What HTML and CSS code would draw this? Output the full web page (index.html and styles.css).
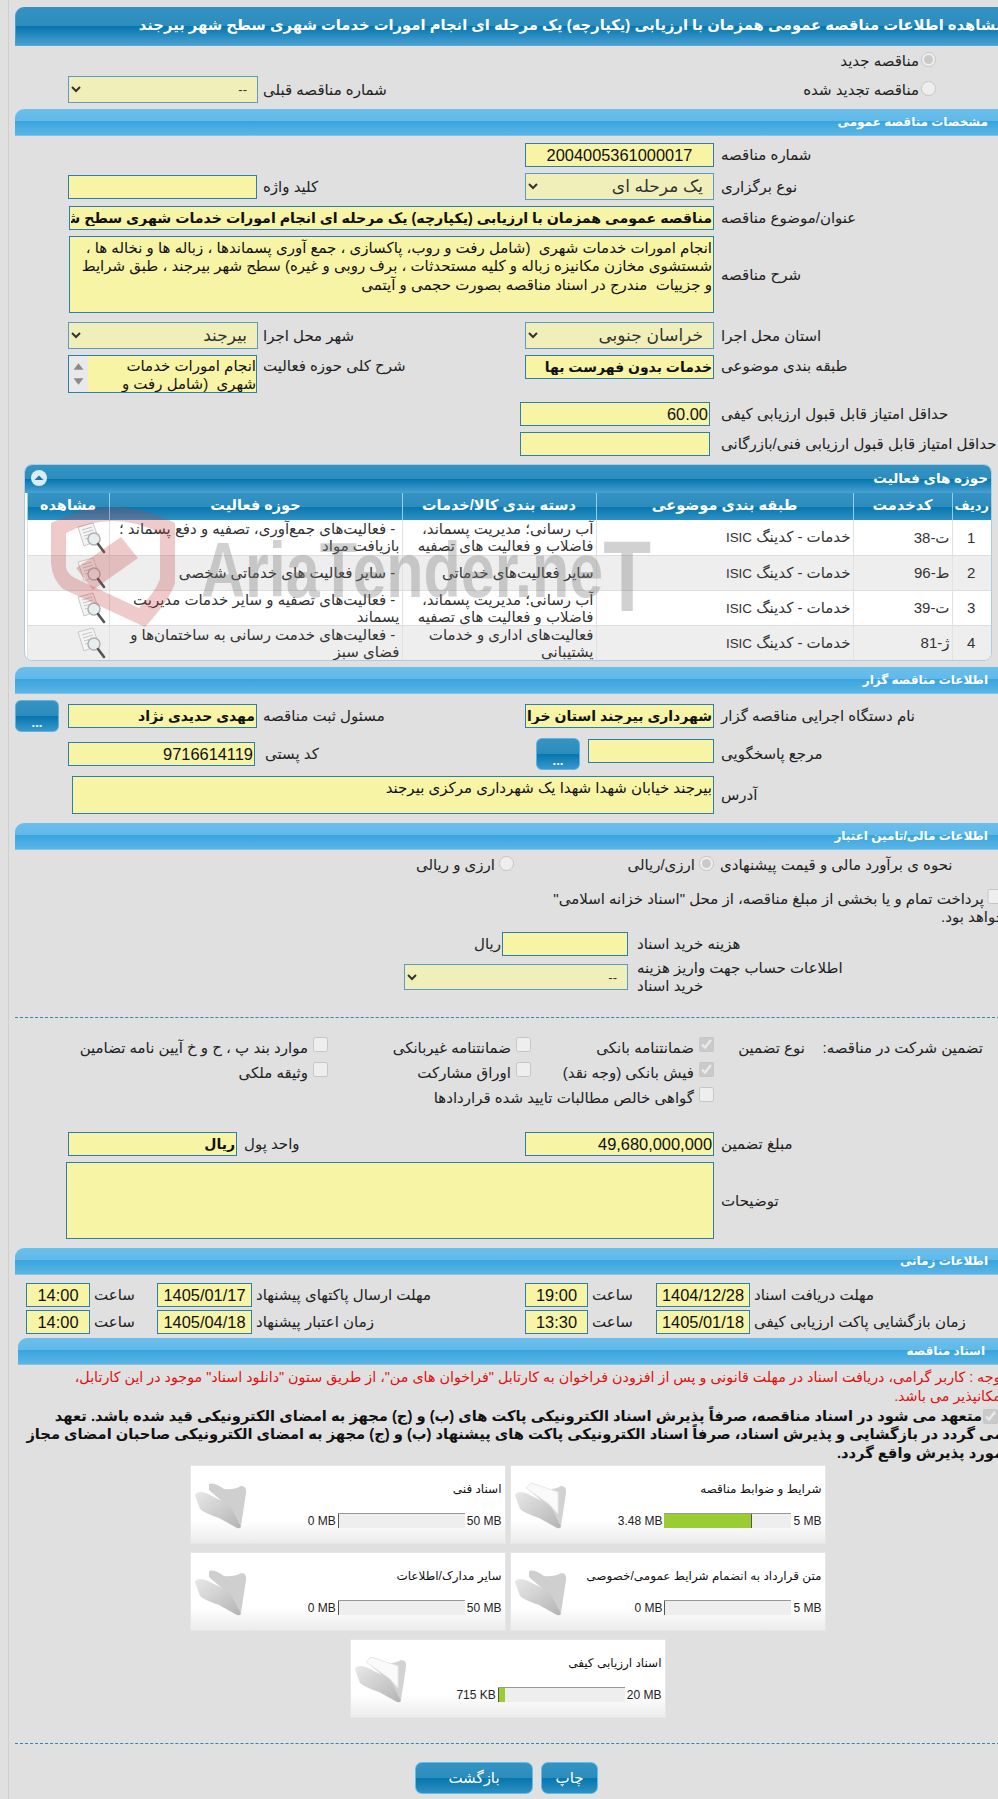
FILE: index.html
```html
<!DOCTYPE html>
<html lang="fa">
<head>
<meta charset="utf-8">
<title>مشاهده اطلاعات مناقصه</title>
<link rel="stylesheet" href="styles.css">
</head>
<body>
<div class="page">
  <h1 class="title">مشاهده اطلاعات مناقصه عمومی همزمان با ارزیابی (یکپارچه) یک مرحله ای انجام امورات خدمات شهری سطح شهر بیرجند</h1>

  <div class="radio-new"><label class="check"><input type="radio" name="kind" checked disabled>مناقصه جدید</label></div>
  <div class="row m6">
    <div class="radio-renew"><label class="check"><input type="radio" name="kind" disabled>مناقصه تجدید شده</label></div>
    <div></div>
    <div class="lbl">شماره مناقصه قبلی</div>
    <select class="sel narrow" disabled><option>--</option></select>
  </div>

  <h2 class="bar m6">مشخصات مناقصه عمومی</h2>
  <div class="row m7">
    <div class="lbl">شماره مناقصه</div>
    <input class="fld mid center" value="2004005361000017" readonly>
  </div>
  <div class="row m6">
    <div class="lbl">نوع برگزاری</div>
    <select class="sel mid big" disabled><option>یک مرحله ای</option></select>
    <div class="lbl">کلید واژه</div>
    <input class="fld narrow" readonly>
  </div>
  <div class="row m6">
    <div class="lbl">عنوان/موضوع مناقصه</div>
    <input class="fld wide strong" value="مناقصه عمومی همزمان با ارزیابی (یکپارچه) یک مرحله ای انجام امورات خدمات شهری سطح شهر بیرجند" readonly>
  </div>
  <div class="row m6">
    <div class="lbl">شرح مناقصه</div>
    <textarea class="fld wide desc" readonly>انجام امورات خدمات شهری  (شامل رفت و روب، پاکسازی ، جمع آوری پسماندها ، زباله ها و نخاله ها ، شستشوی مخازن مکانیزه زباله و کلیه مستحدثات ، برف روبی و غیره) سطح شهر بیرجند ، طبق شرایط و جزییات  مندرج در اسناد مناقصه بصورت حجمی و آیتمی</textarea>
  </div>
  <div class="row m9">
    <div class="lbl">استان محل اجرا</div>
    <select class="sel mid big" disabled><option>خراسان جنوبی</option></select>
    <div class="lbl">شهر محل اجرا</div>
    <select class="sel narrow big" disabled><option>بیرجند</option></select>
  </div>
  <div class="row m6 top">
    <div class="lbl">طبقه بندی موضوعی</div>
    <input class="fld mid strong" value="خدمات بدون فهرست بها" readonly>
    <div class="lbl">شرح کلی حوزه فعالیت</div>
    <div class="scope">
      <div class="scope-text">انجام امورات خدمات شهری  (شامل رفت و روب، پاکسازی ، جمع آوری پسماندها</div>
      <div class="scope-bar">
        <svg viewBox="0 0 10 8"><path d="M5 1 L9.5 7 L.5 7 Z"/></svg>
        <svg viewBox="0 0 10 8"><path d="M.5 1 L9.5 1 L5 7 Z"/></svg>
      </div>
    </div>
  </div>
  <div class="row m9">
    <div class="lbl">حداقل امتیاز قابل قبول ارزیابی کیفی</div>
    <input class="fld score num" value="60.00" readonly>
  </div>
  <div class="row m6">
    <div class="lbl">حداقل امتیاز قابل قبول ارزیابی فنی/بازرگانی</div>
    <input class="fld score" readonly>
  </div>

  <section class="activity">
    <div class="activity-head">
      <span>حوزه های فعالیت</span>
      <svg class="collapse" viewBox="0 0 16 16"><circle cx="8" cy="8" r="8" fill="#d9ecf7"/><path d="M3.5 10 L8 5.5 L12.5 10 Z" fill="#1878ac"/></svg>
    </div>
    <table class="grid">
      <thead>
        <tr><th class="c1">ردیف</th><th class="c2">کدخدمت</th><th class="c3">طبقه بندی موضوعی</th><th class="c4">دسته بندی کالا/خدمات</th><th class="c5">حوزه فعالیت</th><th class="c6">مشاهده</th></tr>
      </thead>
      <tbody>
        <tr>
          <td class="mid-cell">1</td><td class="code">ت-38</td><td>خدمات - کدینگ <span class="latin">ISIC</span></td>
          <td>آب رسانی؛ مدیریت پسماند، فاضلاب و فعالیت های تصفیه</td>
          <td>&nbsp;- فعالیت‌های جمع‌آوری، تصفیه و دفع پسماند ؛ بازیافت مواد</td>
          <td class="view"><svg class="doc" viewBox="0 0 30 32"><use href="#doc-icon"/></svg></td>
        </tr>
        <tr>
          <td class="mid-cell">2</td><td class="code">ط-96</td><td>خدمات - کدینگ <span class="latin">ISIC</span></td>
          <td>سایر فعالیت‌های خدماتی</td>
          <td>&nbsp;- سایر فعالیت های خدماتی شخصی</td>
          <td class="view"><svg class="doc" viewBox="0 0 30 32"><use href="#doc-icon"/></svg></td>
        </tr>
        <tr>
          <td class="mid-cell">3</td><td class="code">ت-39</td><td>خدمات - کدینگ <span class="latin">ISIC</span></td>
          <td>آب رسانی؛ مدیریت پسماند، فاضلاب و فعالیت های تصفیه</td>
          <td>&nbsp;- فعالیت‌های تصفیه و سایر خدمات مدیریت پسماند</td>
          <td class="view"><svg class="doc" viewBox="0 0 30 32"><use href="#doc-icon"/></svg></td>
        </tr>
        <tr>
          <td class="mid-cell">4</td><td class="code">ژ-81</td><td>خدمات - کدینگ <span class="latin">ISIC</span></td>
          <td>فعالیت‌های اداری و خدمات پشتیبانی</td>
          <td>&nbsp;- فعالیت‌های خدمت رسانی به ساختمان‌ها و فضای سبز</td>
          <td class="view"><svg class="doc" viewBox="0 0 30 32"><use href="#doc-icon"/></svg></td>
        </tr>
      </tbody>
    </table>
    <svg class="watermark" viewBox="0 0 620 135" aria-hidden="true">
      <path fill-rule="evenodd" fill="#c43c3c" fill-opacity=".27" d="M0 22 Q62 -10 124 22 L124 82 Q118 100 94 126 L12 88 Q1 78 0 62 Z M15 32 L15 66 Q16 73 24 77 L88 107 Q104 92 109 78 L109 32 Q62 8 15 32 Z"/>
      <path fill="#c43c3c" fill-opacity=".27" d="M70 36 L87 57 L42 89 L25 67 Z"/>
      <text class="wm-text" x="150" y="96" textLength="450" lengthAdjust="spacingAndGlyphs">AriaTender.ne<tspan class="wm-big" dy="14">T</tspan></text>
    </svg>
  </section>

  <h2 class="bar m6">اطلاعات مناقصه گزار</h2>
  <div class="row m6">
    <div class="lbl">نام دستگاه اجرایی مناقصه گزار</div>
    <input class="fld mid strong" value="شهرداری بیرجند استان خراسان جنوبی" readonly>
    <div class="lbl">مسئول ثبت مناقصه</div>
    <div class="with-btn">
      <input class="fld narrow-b strong" value="مهدی حدیدی نژاد" readonly>
      <button class="dots" type="button">...</button>
    </div>
  </div>
  <div class="row m6">
    <div class="lbl">مرجع پاسخگویی</div>
    <div class="with-btn ref">
      <input class="fld ref-fld" readonly>
      <button class="dots" type="button">...</button>
    </div>
    <div class="lbl post-lbl">کد پستی</div>
    <input class="fld post num" value="9716614119" readonly>
  </div>
  <div class="row m6">
    <div class="lbl">آدرس</div>
    <textarea class="fld addr" readonly>بیرجند خیابان شهدا شهدا یک شهرداری مرکزی بیرجند</textarea>
  </div>

  <h2 class="bar m9">اطلاعات مالی/تامین اعتبار</h2>
  <div class="row m6 fin">
    <div class="lbl">نحوه ی برآورد مالی و قیمت پیشنهادی</div>
    <label class="check"><input type="radio" name="cur" checked disabled>ارزی/ریالی</label>
    <label class="check"><input type="radio" name="cur" disabled>ارزی و ریالی</label>
  </div>
  <label class="treasury"><input type="checkbox" disabled>پرداخت تمام و یا بخشی از مبلغ مناقصه، از محل "اسناد خزانه اسلامی" خواهد بود.</label>
  <div class="cost m6">
    <div class="lbl">هزینه خرید اسناد</div>
    <input class="fld cost-fld" readonly>
    <span class="unit">ریال</span>
  </div>
  <div class="cost m3">
    <div class="lbl acct">اطلاعات حساب جهت واریز هزینه خرید اسناد</div>
    <select class="sel acct-sel" disabled><option>--</option></select>
  </div>
  <hr class="dash">

  <div class="guar g-first">
    <div class="g-a">تضمین شرکت در مناقصه:</div>
    <div class="g-b">نوع تضمین</div>
    <label class="check"><input type="checkbox" checked disabled>ضمانتنامه بانکی</label>
    <label class="check"><input type="checkbox" disabled>ضمانتنامه غیربانکی</label>
    <label class="check"><input type="checkbox" disabled>موارد بند پ ، ح و خ آیین نامه تضامین</label>
  </div>
  <div class="guar">
    <div></div><div></div>
    <label class="check"><input type="checkbox" checked disabled>فیش بانکی (وجه نقد)</label>
    <label class="check"><input type="checkbox" disabled>اوراق مشارکت</label>
    <label class="check"><input type="checkbox" disabled>وثیقه ملکی</label>
  </div>
  <div class="guar">
    <div></div><div></div>
    <label class="check wide-check"><input type="checkbox" disabled>گواهی خالص مطالبات تایید شده قراردادها</label>
  </div>

  <div class="row m-amount">
    <div class="lbl">مبلغ تضمین</div>
    <input class="fld mid num" value="49,680,000,000" readonly>
    <div class="lbl unit-lbl">واحد پول</div>
    <input class="fld unit-fld strong" value="ریال" readonly>
  </div>
  <div class="row m6">
    <div class="lbl">توضیحات</div>
    <textarea class="fld note" readonly></textarea>
  </div>

  <h2 class="bar m9">اطلاعات زمانی</h2>
  <div class="times m8">
    <div class="lbl">مهلت دریافت اسناد</div><input class="fld tm" value="1404/12/28" readonly>
    <div class="lbl">ساعت</div><input class="fld tm" value="19:00" readonly>
    <div class="lbl">مهلت ارسال پاکتهای پیشنهاد</div><input class="fld tm" value="1405/01/17" readonly>
    <div class="lbl">ساعت</div><input class="fld tm" value="14:00" readonly>
  </div>
  <div class="times m3">
    <div class="lbl">زمان بازگشایی پاکت ارزیابی کیفی</div><input class="fld tm" value="1405/01/18" readonly>
    <div class="lbl">ساعت</div><input class="fld tm" value="13:30" readonly>
    <div class="lbl">زمان اعتبار پیشنهاد</div><input class="fld tm" value="1405/04/18" readonly>
    <div class="lbl">ساعت</div><input class="fld tm" value="14:00" readonly>
  </div>

  <h2 class="bar docs-bar">اسناد مناقصه</h2>
  <p class="notice">توجه : کاربر گرامی، دریافت اسناد در مهلت قانونی و پس از افزودن فراخوان به کارتابل "فراخوان های من"، از طریق ستون "دانلود اسناد" موجود در این کارتابل، امکانپذیر می باشد.</p>
  <label class="pledge"><input type="checkbox" checked disabled>متعهد می شود در اسناد مناقصه، صرفاً پذیرش اسناد الکترونیکی پاکت های (ب) و (ج) مجهز به امضای الکترونیکی قید شده باشد. تعهد<br>می گردد در بازگشایی و پذیرش اسناد، صرفاً اسناد الکترونیکی پاکت های پیشنهاد (ب) و (ج) مجهز به امضای الکترونیکی صاحبان امضای مجاز مورد پذیرش واقع گردد.</label>

  <div class="cards">
    <div class="card">
      <div class="card-title">شرایط و ضوابط مناقصه</div>
      <div class="meter"><span>3.48 MB</span><div class="track"><div class="fill f70"></div></div><span>5 MB</span></div>
      <svg class="folder" viewBox="0 0 54 50"><use href="#folder-full"/></svg>
    </div>
    <div class="card">
      <div class="card-title">اسناد فنی</div>
      <div class="meter"><span>0 MB</span><div class="track"><div class="fill f0"></div></div><span>50 MB</span></div>
      <svg class="folder" viewBox="0 0 54 50"><use href="#folder-empty"/></svg>
    </div>
    <div class="card">
      <div class="card-title">متن قرارداد به انضمام شرایط عمومی/خصوصی</div>
      <div class="meter"><span>0 MB</span><div class="track"><div class="fill f0"></div></div><span>5 MB</span></div>
      <svg class="folder" viewBox="0 0 54 50"><use href="#folder-empty"/></svg>
    </div>
    <div class="card">
      <div class="card-title">سایر مدارک/اطلاعات</div>
      <div class="meter"><span>0 MB</span><div class="track"><div class="fill f0"></div></div><span>50 MB</span></div>
      <svg class="folder" viewBox="0 0 54 50"><use href="#folder-empty"/></svg>
    </div>
    <div class="card">
      <div class="card-title">اسناد ارزیابی کیفی</div>
      <div class="meter"><span>715 KB</span><div class="track"><div class="fill f4"></div></div><span>20 MB</span></div>
      <svg class="folder" viewBox="0 0 54 50"><use href="#folder-full"/></svg>
    </div>
  </div>

  <hr class="dash dash-end">
  <div class="actions">
    <button class="act act-print" type="button">چاپ</button>
    <button class="act act-back" type="button">بازگشت</button>
  </div>
</div>

<svg class="defs" aria-hidden="true">
  <defs>
    <linearGradient id="fg" x1="0" y1="0" x2="1" y2="1"><stop offset="0" stop-color="#e8e8e8"/><stop offset="1" stop-color="#b4b4b4"/></linearGradient>
    <g id="doc-icon">
      <path d="M2 5 L17 1 L23 18 L8 24 Z" fill="#f4f4f4" stroke="#c8c8c8"/>
      <path d="M6 8 L16 5 M7 11 L17 8 M8 14 L15 12 M9 17 L13 16" stroke="#c4c4c4" fill="none"/>
      <circle cx="18" cy="17" r="6" fill="#e8eef0" stroke="#b0b0b0" stroke-width="1.5"/>
      <path d="M22 22 L28 30" stroke="#555" stroke-width="2.6" stroke-linecap="round"/>
    </g>
    <g id="folder-empty">
      <path d="M15 4 Q20 2 30 9 Q40 10 47 6 Q53 6 52 13 L47 46 L38 30 L15 10 Z" fill="#cfcfcf"/>
      <path d="M1 15 Q2 12 7 12 L12 13 L32 23 Q37 26 39 31 L47 46 Q47 49 43 48 L25 38 Q10 33 6 29 Z" fill="url(#fg)"/>
    </g>
    <g id="folder-full">
      <path d="M15 4 Q20 2 30 9 Q40 10 47 6 Q53 6 52 13 L47 46 L38 30 L15 10 Z" fill="#d2d2d2"/>
      <path d="M12 8 L17 3 L44 12 L44 34 L35 24 Z" fill="#fafafa" stroke="#e8e8e8"/>
      <path d="M1 15 Q2 12 7 12 L12 13 L32 23 Q37 26 39 31 L47 46 Q47 49 43 48 L25 38 Q10 33 6 29 Z" fill="url(#fg)"/>
    </g>
  </defs>
</svg>
</body>
</html>
```
FILE: styles.css
```css
* { box-sizing: border-box; }
html, body { margin: 0; padding: 0; overflow-x: hidden; }
body {
  background: #e0e0e0;
  width: 998px;
  font-family: "Liberation Sans", "DejaVu Sans", sans-serif;
  font-size: 15px;
  color: #222;
}
.page {
  position: relative;
  direction: rtl;
  margin-left: 8px;
  border-left: 1px solid #cfcfcf;
  padding: 7px 0 0 6px;
  width: 997px;
  height: 1799px;
  overflow: hidden;
}
.page > * { width: 990px; }

.title {
  margin: 0;
  height: 39px;
  line-height: 37px;
  font-size: 14.75px;
  font-weight: bold;
  color: #fff;
  white-space: nowrap;
  background: linear-gradient(#3493c2 0, #2c8cbb 50%, #0576ae 51%, #4aa0d2 100%);
  border-top-left-radius: 9px;
  border-left: 1px solid #4a9fd0;
  border-bottom: 1px solid #58a9d8;
}
.bar {
  margin: 0;
  height: 27px;
  line-height: 26px;
  padding-right: 17px;
  font-size: 12px;
  font-weight: bold;
  color: #fff;
  background: linear-gradient(#6abfeb 0, #61b9e9 45%, #39a4df 46%, #5bb5e4 100%);
  border-top-left-radius: 9px;
  border-bottom: 1px solid #7ec4ea;
}
.docs-bar { margin-top: 4px; width: 987.5px; padding-right: 20px; }

.m3 { margin-top: 3px; }
.m6 { margin-top: 6px; }
.m7 { margin-top: 7px; }
.m8 { margin-top: 8px; }
.m9 { margin-top: 9px; }
.m-amount { margin-top: 21.5px; }

.row {
  display: grid;
  grid-template-columns: 285px 195px 263px 204px;
  align-items: center;
}
.row.top { align-items: start; }
.row.top .lbl { padding-top: 2px; }
.lbl { text-align: left; padding-left: 1px; font-size: 15px; line-height: 18px; white-space: nowrap; }
.post-lbl { padding-left: 3px; }
.unit-lbl { margin-left: -19px; }

.fld {
  display: block;
  height: 24px;
  padding: 0 1px;
  border: 1px solid #2a7fb0;
  background: #f7f4a6;
  border-radius: 0;
  font-family: "Liberation Sans", "DejaVu Sans", sans-serif;
  font-size: 15px;
  color: #111;
  outline: none;
  resize: none;
}
textarea.fld { font-size: 15px; line-height: 18.3px; padding: 2px 1px; }
.strong { font-weight: bold; font-size: 14px; }
.wide.strong { font-size: 14.2px; }
.center { text-align: center; font-size: 16.4px; }
.num { font-size: 16.4px; }
.mid { width: 189px; margin-right: 6px; }
.narrow { width: 189px; margin-right: 5px; }
.wide { width: 645.5px; margin-right: 6px; grid-column: 2 / span 3; }
.desc { height: 77px; }
.score { width: 190px; margin-right: 10px; }
.sel {
  height: 27px;
  padding: 0 6px;
  border: 1px solid #5b9bc4;
  background: #f1efb9;
  font-family: "Liberation Sans", "DejaVu Sans", sans-serif;
  font-size: 13px;
  color: #333;
  opacity: 1;
}
.sel.big { font-size: 17px; }
.narrow.sel { width: 190px; margin-right: 4px; }

.scope {
  display: flex;
  width: 189px;
  height: 38px;
  margin-right: 5px;
  border: 1px solid #2a7fb0;
  background: #f7f4a6;
  overflow: hidden;
}
.scope-text {
  flex: 1;
  font-size: 15px;
  line-height: 18.3px;
  padding: 1px 0 0 16px;
  color: #111;
  overflow: hidden;
  white-space: pre-wrap;
}
.scope-bar {
  width: 19px;
  flex: none;
  display: flex;
  flex-direction: column;
  justify-content: space-between;
  align-items: center;
  padding: 6px 0;
  background: #e9e9e9;
}
.scope-bar svg { width: 11px; height: 9px; fill: #8a8a8a; }

.check { display: flex; align-items: center; font-size: 15px; white-space: nowrap; line-height: 18px; }
.check input { margin: 0 0 3px 5px; width: 15px; height: 15px; flex: none; }
.radio-new { padding-right: 69px; margin-top: 6px; height: 18px; }
.radio-new .check input, .radio-renew .check input { margin-left: 2px; }
.radio-renew { padding-right: 69px; }

.with-btn { display: flex; align-items: center; }
.narrow-b { width: 189px; margin-right: 5px; flex: none; }
.dots {
  width: 44px;
  height: 32px;
  margin-right: 9px;
  padding: 12px 0 0;
  flex: none;
  border: 1px solid #5cb4e0;
  border-radius: 6px;
  background: linear-gradient(#3493c2 0, #2c8cbb 50%, #0576ae 51%, #3a98cc 100%);
  color: #fff;
  font-size: 13px;
  font-weight: bold;
  font-family: "Liberation Sans", sans-serif;
}
.ref { align-items: flex-start; }
.ref-fld { width: 126px; margin: 1px 6px 0 0; flex: none; }
.ref .dots { margin-right: 8px; }
.post { width: 187px; margin-right: 7px; }
.addr { width: 642px; height: 38px; margin-right: 6px; grid-column: 2 / span 3; }
.note { width: 648px; height: 77px; margin-right: 6px; grid-column: 2 / span 3; }
.unit-fld { width: 169px; margin-right: 25px; }

.fin { grid-template-columns: 291px 200px 300px; height: 18px; }
.fin .lbl { padding-left: 6px; }
.fin .check input { margin-left: 4px; }
.treasury {
  display: block;
  width: 475px !important;
  margin-top: 15px;
  font-size: 15px;
  line-height: 18px;
}
.treasury input { margin: 0 0 0 1px; width: 20px; height: 15px; }
.cost { display: flex; align-items: center; }
.cost .lbl { width: 377px; padding-left: 9px; flex: none; }
.cost .lbl.acct { white-space: normal; padding-right: 145px; }
.cost-fld { width: 126px; flex: none; }
.acct-sel { width: 224px; height: 26px; }
.unit { font-size: 15px; margin-right: 1px; }

.dash { height: 0; margin: 22px 0 0; border: 0; border-top: 1px dashed #2a8ab5; }
.dash-end { margin-top: 25px; }

.guar {
  display: grid;
  grid-template-columns: 200px 91px 183px 203px 300px;
  align-items: center;
  height: 25px;
  font-size: 15px;
}
.guar .check input { margin-bottom: 7px; }
.g-first { margin-top: 17.5px; }
.g-a { padding-right: 22px; white-space: nowrap; }
.g-b { white-space: nowrap; }
.wide-check { grid-column: 3 / span 3; }

.times {
  display: grid;
  grid-template-columns: 255px 94px 68px 63px 273px 95px 67px 64px;
  align-items: center;
}
.times .lbl { padding-left: 4px; }
.tm { height: 24px; font-size: 16.4px; padding: 0; text-align: center; width: 100%; }

.notice { margin: 3px 0 0; color: #e01010; font-size: 14.3px; line-height: 18.5px; padding-left: 20px; }
.pledge { display: block; margin-top: 1.5px; font-weight: bold; font-size: 14.7px; line-height: 18.5px; color: #111; padding-left: 2px; padding-right: 2px; }
.pledge input { margin: 0 5px 0 1px; width: 15px; height: 15px; vertical-align: middle; }

.cards {
  display: flex;
  flex-wrap: wrap;
  justify-content: center;
  gap: 8px 4px;
  width: 641px !important;
  margin: 3px 177px 0 0;
}
.card {
  position: relative;
  width: 316px;
  height: 79px;
  padding: 15px 3px 0 4px;
  background: linear-gradient(#fff 0, #fff 70%, #ececec 100%);
  border: 1px solid #e6e6e6;
}
.card-title { font-size: 12px; line-height: 16px; color: #111; }
.meter { direction: ltr; display: flex; justify-content: flex-end; align-items: center; gap: 2px; margin-top: 16px; font-size: 12px; }
.track { width: 127px; height: 15px; background: #eee; border-top: 1px solid #999; }
.fill { height: 14px; background: #9acd32; border-right: 1px solid #555; }
.f0 { width: 1px; background: #555; }
.f4 { width: 7px; border-left: 1px solid #555; border-right: 0; }
.f70 { width: 88px; }
.folder { position: absolute; left: 3px; top: 14px; width: 54px; height: 50px; filter: blur(.4px); }

.actions { display: flex; gap: 8px; margin: 18px 407px 0 0; width: 200px !important; }
.act {
  height: 32px;
  border: 1px solid #5cc0ee;
  border-radius: 7px;
  background: linear-gradient(#3493c2 0, #2c8cbb 50%, #0576ae 51%, #2f90c2 100%);
  color: #fff;
  font-size: 15px;
  font-family: "DejaVu Sans", sans-serif;
}
.act-print { width: 57px; }
.act-back { width: 118px; }

.activity {
  position: relative;
  width: 968px !important;
  margin: 8px 13px 0 0;
  background: #fff;
  border: 1px solid #a9cde3;
  border-radius: 8px;
  height: 197px;
  overflow: hidden;
}
.activity-head {
  height: 28px;
  display: flex;
  justify-content: space-between;
  align-items: center;
  padding: 0 3px 2px 6px;
  font-size: 13.5px;
  font-weight: bold;
  color: #fff;
  background: linear-gradient(#3493c2 0, #2c8cbb 50%, #0576ae 51%, #4aa0d2 100%);
}
.collapse { width: 16px; height: 16px; }
.grid { width: 964px; border-collapse: collapse; table-layout: fixed; font-size: 15px; line-height: 17px; margin-left: 2px; }
.grid th {
  height: 27px;
  padding: 0 0 3px;
  color: #fff;
  font-size: 14.5px;
  font-weight: bold;
  text-align: center;
  background: linear-gradient(#3493c2 0, #2c8cbb 50%, #0576ae 51%, #2f90c2 100%);
  border-left: 1px solid #8fd0f2;
}
.grid th.c1 { width: 39px; font-size: 13px; }
.c2 { width: 99px; }
.c3 { width: 257px; }
.c4 { width: 194px; }
.c5 { width: 293px; }
.c6 { width: 82px; }
.grid td { height: 35px; padding: 0 2px 0 1px; border-left: 1px solid #e2e2e2; border-bottom: 1px solid #ddd; color: #333; overflow: hidden; }
.grid tbody tr:nth-child(even) td { background: #eeeeee; }
.grid td.mid-cell { text-align: center; }
.grid td.view { padding: 0; }
.latin { font-size: 13.4px; }
.doc { width: 30px; height: 32px; display: block; margin: 1px 3px 0 49px; }

.watermark {
  position: absolute;
  left: 26px;
  top: 36px;
  width: 620px;
  height: 135px;
  pointer-events: none;
  direction: ltr;
}
.wm-text { font-family: "Liberation Sans", sans-serif; font-size: 78px; font-weight: bold; fill: #777; fill-opacity: .34; }
.wm-big { font-size: 100px; }
.defs { position: absolute; width: 0; height: 0; }
```
